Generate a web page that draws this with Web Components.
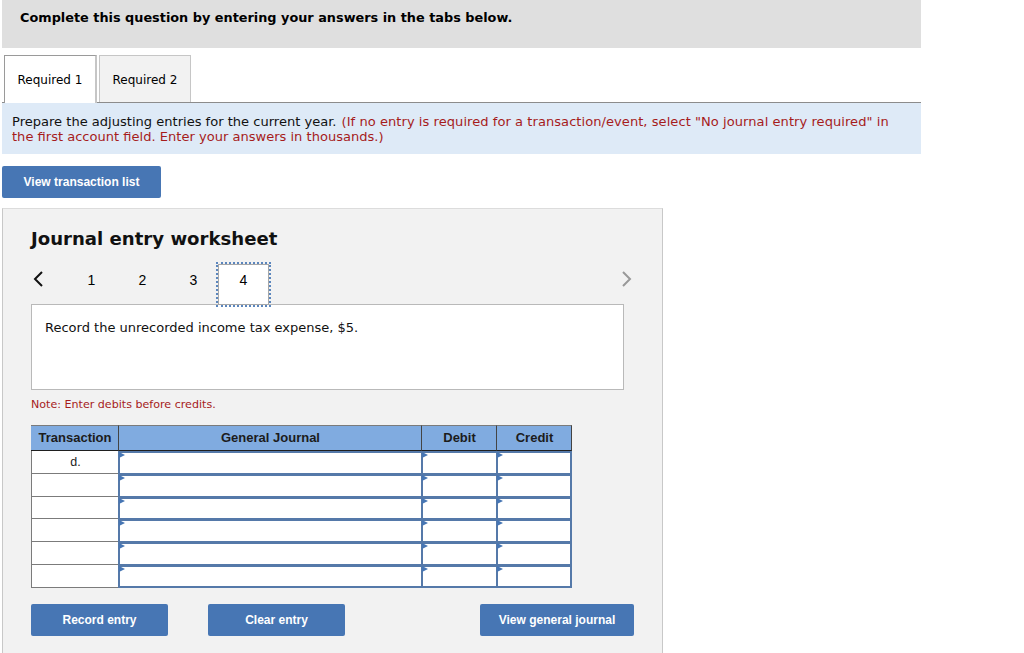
<!DOCTYPE html>
<html>
<head>
<meta charset="utf-8">
<title>Journal entry worksheet</title>
<style>
  html, body { margin: 0; padding: 0; background: #fff; }
  body { font-family: "DejaVu Sans", Verdana, sans-serif; color: #000; height: 653px; overflow: hidden; }
  .page { width: 919px; margin-left: 2px; }
</style>
</head>
<body>
<div class="page">
  <q-header>Complete this question by entering your answers in the tabs below.</q-header>
  <q-tabs></q-tabs>
  <q-instructions>
    <span slot="black">Prepare the adjusting entries for the current year.</span>
    <span slot="red">(If no entry is required for a transaction/event, select "No journal entry required" in</span>
    <span slot="red2">the first account field. Enter your answers in thousands.)</span>
  </q-instructions>
  <blue-button style="width:159px;height:32px;margin-top:12px">View transaction list</blue-button>
  <je-worksheet></je-worksheet>
</div>

<script>
class QHeader extends HTMLElement {
  constructor() {
    super();
    this.attachShadow({ mode: "open" });
    this.shadowRoot.innerHTML = `
      <style>
        :host { display: block; height: 48px; background: #dfdfdf; box-sizing: border-box; padding: 9px 18px; font-size: 12.85px; font-weight: bold; line-height: 17px; }
      </style>
      <slot></slot>`;
  }
}

class QTabs extends HTMLElement {
  constructor() {
    super();
    this.attachShadow({ mode: "open" });
    this.shadowRoot.innerHTML = `
      <style>
        :host { display: flex; height: 48px; box-sizing: border-box; margin-top: 7px; padding-left: 2px; gap: 2px; border-bottom: 1px solid #8c8c8c; }
        div { box-sizing: border-box; height: 47px; font-size: 12px; line-height: 49px; text-align: center; border: 1px solid #c6c6c6; border-bottom: 0; }
        .on { width: 93px; background: #fff; border-color: #9a9a9a #c6c6c6 #fff #9a9a9a; border-right-width: 2px; height: 48px; margin-bottom: -1px; }
        .off { width: 92px; background: #f2f2f2; }
      </style>
      <div class="on">Required 1</div>
      <div class="off">Required 2</div>`;
  }
}

class QInstructions extends HTMLElement {
  constructor() {
    super();
    this.attachShadow({ mode: "open" });
    this.shadowRoot.innerHTML = `
      <style>
        :host { display: block; height: 51px; box-sizing: border-box; background: #deeaf7; padding: 11px 10px 0; font-size: 13.05px; line-height: 15px; color: #111; white-space: nowrap; }
        .line { display: flex; gap: 5px; }
        .red { color: #a61c1c; }
        .wide { letter-spacing: 0.047px; }
      </style>
      <div class="line"><slot name="black"></slot><span class="red wide"><slot name="red"></slot></span></div>
      <div class="line red"><slot name="red2"></slot></div>`;
  }
}

class BlueButton extends HTMLElement {
  constructor() {
    super();
    this.attachShadow({ mode: "open" });
    this.shadowRoot.innerHTML = `
      <style>
        :host { display: flex; flex: none; align-items: center; justify-content: center; box-sizing: border-box; background: #4776b4; color: #fff; border-radius: 2px; font-family: "Liberation Sans", Arial, sans-serif; font-weight: bold; font-size: 12px; }
      </style>
      <slot></slot>`;
  }
}

class JeNav extends HTMLElement {
  constructor() {
    super();
    this.attachShadow({ mode: "open" });
    this.shadowRoot.innerHTML = `
      <style>
        :host { display: flex; align-items: flex-start; height: 41px; font-family: "Liberation Sans", Arial, sans-serif; font-size: 14px; line-height: 34px; position: relative; z-index: 1; }
        svg { display: block; }
        .prev { width: 35px; padding-top: 7px; box-sizing: border-box; }
        .n { width: 51px; text-align: center; }
        .cur { box-sizing: border-box; height: 41px; margin: 1px 0 0 -1px; background: #fff; border: 1px solid #a8a8a8; outline: 2px dotted #5b86bd; line-height: 30px; }
        .next { margin-left: auto; margin-right: -9px; margin-top: 7px; }
      </style>
      <div class="prev"><svg width="12" height="18" viewBox="0 0 12 18"><path d="M11 2 L4 9 L11 16" fill="none" stroke="#111" stroke-width="2"/></svg></div>
      <div class="n">1</div>
      <div class="n">2</div>
      <div class="n">3</div>
      <div class="n cur">4</div>
      <svg class="next" width="12" height="18" viewBox="0 0 12 18"><path d="M2 2 L9 9 L2 16" fill="none" stroke="#999" stroke-width="2"/></svg>`;
  }
}

class JeTable extends HTMLElement {
  constructor() {
    super();
    this.attachShadow({ mode: "open" });
    let rows = "";
    for (let i = 0; i < 6; i++) {
      rows += `<div class="tr">${i === 0 ? "d." : ""}</div>`
        + `<div class="in"></div><div class="in"></div><div class="in"></div>`;
    }
    this.shadowRoot.innerHTML = `
      <style>
        :host { display: grid; grid-template-columns: 88px 303px 75px 75px; grid-template-rows: 26px repeat(6, 22.8px); width: 541px; height: 163px; align-content: start; box-sizing: border-box; font-family: "Liberation Sans", Arial, sans-serif; font-size: 13px; }
        .th { display: flex; align-items: center; justify-content: center; padding-bottom: 1px; padding-left: 1px; background: #80abe0; font-weight: bold; color: #1c1c1c; box-sizing: border-box; border-top: 1px solid #7b7b7b; border-bottom: 1px solid #1f1f1f; border-right: 1px solid #444; }
        .th:first-child { border-left: 1px solid #7b7b7b; padding-left: 2px; }
        .tr { background: #fff; box-sizing: border-box; border-left: 1px solid #7b7b7b; border-bottom: 1px solid #7b7b7b; text-align: center; font-size: 12.5px; line-height: 22px; color: #222; }
        .in { background: #fff; box-sizing: border-box; position: relative; margin-left: -1px; border-style: solid; border-color: #5579a9; border-width: 2px 0 1px 2px; }
        .in::before { content: ""; position: absolute; left: -1px; top: -1px; border-left: 6px solid #4776b4; border-top: 3.5px solid transparent; border-bottom: 3.5px solid transparent; }
        .in.last { border-right-width: 2px; }
        .in.bottom { border-bottom-width: 2px; }
      </style>
      <div class="th">Transaction</div>
      <div class="th">General Journal</div>
      <div class="th">Debit</div>
      <div class="th">Credit</div>
      ${rows}`;
    this.shadowRoot.querySelectorAll(".in").forEach((el, i) => {
      if (i % 3 === 2) el.classList.add("last");
      if (i >= 15) el.classList.add("bottom");
    });
  }
}

class JeWorksheet extends HTMLElement {
  constructor() {
    super();
    this.attachShadow({ mode: "open" });
    this.shadowRoot.innerHTML = `
      <style>
        :host { display: block; width: 661px; height: 460px; margin-top: 10px; box-sizing: border-box; background: #f2f2f2; border: 1px solid #c8c8c8; border-top-color: #dcdcdc; padding: 19px 38px 0 28px; }
        h2 { margin: 0; font-size: 18.1px; line-height: 22px; font-weight: bold; color: #111; }
        je-nav { margin-top: 13px; }
        .box { box-sizing: border-box; height: 86px; width: 593px; background: #fff; border: 1px solid #b9b9b9; padding: 14px 13px; font-size: 13px; line-height: 17px; color: #111; }
        .note { margin: 8px 0 13px; font-size: 11.1px; line-height: 14px; color: #a61c1c; }
        .btns { display: flex; margin-top: 16px; }
        .btns blue-button { height: 32px; }
      </style>
      <h2>Journal entry worksheet</h2>
      <je-nav></je-nav>
      <div class="box">Record the unrecorded income tax expense, $5.</div>
      <div class="note">Note: Enter debits before credits.</div>
      <je-table></je-table>
      <div class="btns">
        <blue-button style="width:137px">Record entry</blue-button>
        <blue-button style="width:137px;margin-left:40px">Clear entry</blue-button>
        <blue-button style="width:154px;margin-left:135px">View general journal</blue-button>
      </div>`;
  }
}

customElements.define("q-header", QHeader);
customElements.define("q-tabs", QTabs);
customElements.define("q-instructions", QInstructions);
customElements.define("blue-button", BlueButton);
customElements.define("je-nav", JeNav);
customElements.define("je-table", JeTable);
customElements.define("je-worksheet", JeWorksheet);
</script>
</body>
</html>
